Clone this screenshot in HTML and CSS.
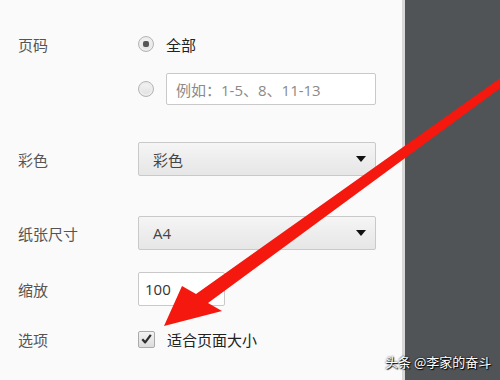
FILE: index.html
```html
<!DOCTYPE html>
<html lang="zh-CN">
<head>
<meta charset="utf-8">
<title>打印设置</title>
<link rel="stylesheet" href="styles.css">
</head>
<body>
<div class="page">
  <div class="panel">
    <div class="row row-pages">
      <div class="label">页码</div>
      <div class="control">
        <span class="radio checked"></span>
        <span class="opt-text">全部</span>
      </div>
    </div>
    <div class="row row-range">
      <div class="label"></div>
      <div class="control">
        <span class="radio"></span>
        <span class="text-input wide">例如：1-5、8、11-13</span>
      </div>
    </div>
    <div class="row row-color">
      <div class="label">彩色</div>
      <div class="control">
        <div class="select"><span>彩色</span><span class="caret"></span></div>
      </div>
    </div>
    <div class="row row-paper">
      <div class="label">纸张尺寸</div>
      <div class="control">
        <div class="select"><span>A4</span><span class="caret"></span></div>
      </div>
    </div>
    <div class="row row-scale">
      <div class="label">缩放</div>
      <div class="control">
        <span class="text-input narrow value">100</span>
      </div>
    </div>
    <div class="row row-options">
      <div class="label">选项</div>
      <div class="control">
        <span class="checkbox">
          <svg viewBox="0 0 16 16" width="16" height="16"><path d="M3.5 8.2 L6.6 11.6 L12.6 3.6" fill="none" stroke="#2e2e2e" stroke-width="2.4" stroke-linejoin="round"/></svg>
        </span>
        <span class="opt-text">适合页面大小</span>
      </div>
    </div>
  </div>
  <div class="preview"></div>
  <svg class="arrow" width="500" height="380" viewBox="0 0 500 380">
    <polygon points="164,326 182,286 196,294 503,76 507,83 208,303 222,311" fill="#f5180e"/>
  </svg>
  <div class="watermark">头条 @李家的奋斗</div>
</div>
</body>
</html>
```

FILE: styles.css
```css
html, body {
  margin: 0;
  padding: 0;
}
body {
  font-family: "Open Sans", "Noto Sans CJK SC", sans-serif;
  font-size: 15px;
}
.page {
  position: relative;
  display: flex;
  width: 500px;
  height: 380px;
  overflow: hidden;
}
.panel {
  width: 384px;
  flex: none;
  background: #fafafa;
  padding: 28px 0 0 18px;
  border-right: 3px solid #d8d8d8;
  display: flex;
  flex-direction: column;
}
.preview {
  flex: 1;
  background: #515457;
}
.row {
  display: flex;
  align-items: center;
  height: 32px;
}
.row-range { margin-top: 13px; }
.row-color { margin-top: 37px; height: 34px; }
.row-paper { margin-top: 40px; height: 34px; }
.row-scale { margin-top: 22px; height: 34px; }
.row-options { margin-top: 17px; }
.label {
  width: 120px;
  flex: none;
  color: #555;
}
.control {
  display: flex;
  align-items: center;
  gap: 12px;
}
.opt-text {
  color: #222;
}
.radio {
  width: 14px;
  height: 14px;
  border: 1px solid #b4b4b4;
  border-radius: 50%;
  background: linear-gradient(#f6f6f6, #dedede);
  display: flex;
  align-items: center;
  justify-content: center;
  box-shadow: inset 0 0 0 2px #ececec;
}
.radio.checked::after {
  content: "";
  width: 6px;
  height: 6px;
  border-radius: 2px;
  background: #555;
}
.text-input {
  box-sizing: border-box;
  height: 32px;
  border: 1px solid #c9c9c9;
  border-radius: 2px;
  background: #fff;
  display: flex;
  align-items: center;
  padding-left: 9px;
  color: #8a8a8a;
}
.text-input.wide { width: 210px; }
.text-input.narrow { width: 87px; height: 34px; padding-left: 6px; }
.text-input.value { color: #333; }
.select {
  box-sizing: border-box;
  width: 238px;
  height: 34px;
  border: 1px solid #c9c9c9;
  border-radius: 2px;
  background: linear-gradient(#f5f5f5, #e6e6e6);
  display: flex;
  align-items: center;
  justify-content: space-between;
  padding: 0 9px 0 14px;
  color: #444;
}
.caret {
  width: 0;
  height: 0;
  border-left: 5px solid transparent;
  border-right: 5px solid transparent;
  border-top: 6px solid #111;
}
.checkbox {
  box-sizing: border-box;
  width: 17px;
  height: 17px;
  border: 1px solid #aaa;
  border-radius: 2px;
  background: linear-gradient(#f4f4f4, #dcdcdc);
  display: flex;
  align-items: center;
  justify-content: center;
}
.checkbox svg { display: block; }
.arrow {
  position: absolute;
  left: 0;
  top: 0;
  pointer-events: none;
}
.watermark {
  position: absolute;
  left: 385px;
  top: 352px;
  font-family: "Noto Sans CJK SC", sans-serif;
  font-size: 13px;
  color: #fff;
  text-shadow: 1px 1px 1px #000, 0 0 2px #000;
  white-space: nowrap;
}
```
